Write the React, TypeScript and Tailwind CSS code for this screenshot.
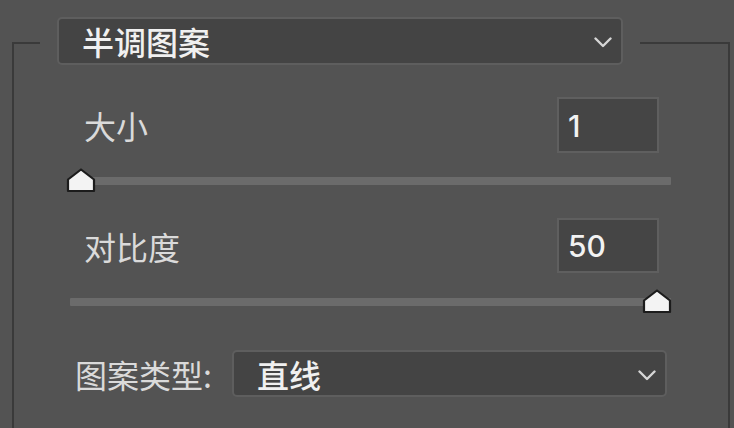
import React from 'react';

const CJK = "font-['Noto_Sans_CJK_SC','Noto_Sans',sans-serif]";

const Chevron = () => (
  <svg width="18" height="11" viewBox="0 0 18 11" className="mt-[3px] shrink-0">
    <polyline points="1.5,1.5 9,9 16.5,1.5" fill="none" stroke="#d6d6d6" strokeWidth="2.4" strokeLinecap="round" strokeLinejoin="round" />
  </svg>
);

const Select = ({ value, className }: { value: string; className: string }) => (
  <div className={`flex items-center justify-between rounded-[5px] border-2 border-[#5e5e5e] bg-[#444444] pl-[23px] pr-[9px] ${className}`}>
    <span className={`${CJK} text-[32px] leading-none font-medium text-[#f0f0f0]`}>{value}</span>
    <Chevron />
  </div>
);

const NumberBox = ({ value }: { value: string }) => (
  <div className="flex items-center w-[102px] h-full border-2 border-[#5f5f5f] bg-[#454545] pl-[9px] mr-[12px]">
    <span className="font-['Inter','Liberation_Sans',sans-serif] font-medium text-[30px] leading-none text-[#f2f2f2] mt-[1px]">{value}</span>
  </div>
);

const Slider = ({ pct, className }: { pct: number; className: string }) => (
  <div className={`relative h-[24px] pt-[9px] ${className}`}>
    <div className="h-[8px] rounded-[1px] bg-[#6b6b6b]" />
    {/* thumb sits over the track */}
    <svg
      width="30"
      height="25"
      viewBox="0 0 30 25"
      className="absolute top-0"
      style={{ left: -4 + pct * 576 }}
    >
      <polygon points="2,23 2,11.5 15,1.5 28,11.5 28,23" fill="#f3f3f3" stroke="#1c1c1c" strokeWidth="2.2" strokeLinejoin="round" />
    </svg>
  </div>
);

const ParamRow = ({ label, value, className }: { label: string; value: string; className: string }) => (
  <div className={`flex items-center justify-between ${className}`}>
    <span className={`${CJK} pl-[14px] text-[32px] leading-none text-[#dadada]`}>{label}</span>
    <NumberBox value={value} />
  </div>
);

export default function App() {
  return (
    <div className="h-screen w-full overflow-hidden bg-[#535353] pt-[17px]">
      <fieldset className="ml-[12px] w-[718px] border-2 border-[#3a3a3a] pb-[40px]">
        <legend className="ml-[26px] px-[17px] pb-[4px]">
          <Select value="半调图案" className="w-[566px] h-[48px]" />
        </legend>

        <div className="pl-[56px] pr-[57px]">
          <ParamRow label="大小" value="1" className="mt-[28px] h-[56px]" />
          <Slider pct={0} className="mt-[15px]" />

          <ParamRow label="对比度" value="50" className="mt-[26px] h-[55px]" />
          <Slider pct={1} className="mt-[16px]" />

          <div className="mt-[37px] flex h-[47px] items-center">
            <span className={`${CJK} pl-[5px] text-[32px] leading-none text-[#dadada]`}>图案类型:</span>
            <Select value="直线" className="ml-auto mr-[4px] w-[435px] h-full" />
          </div>
        </div>
      </fieldset>
    </div>
  );
}
